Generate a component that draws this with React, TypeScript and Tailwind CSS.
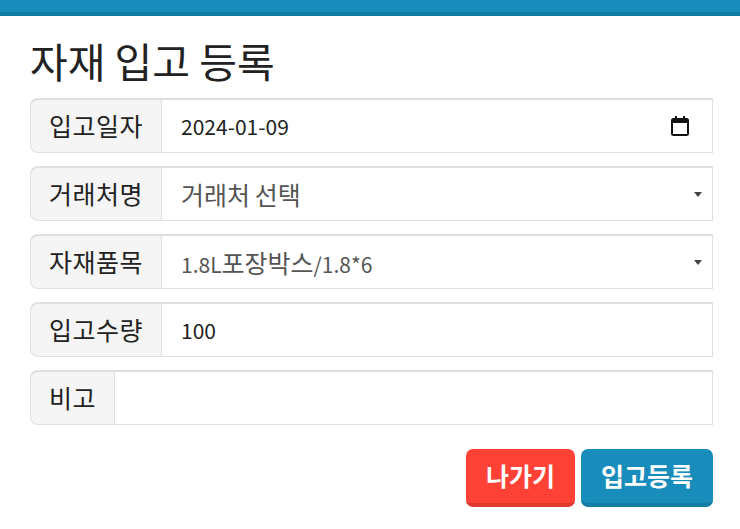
const rows: { label: string; value: string; kind: "date" | "select" | "text" }[] = [
  { label: "입고일자", value: "2024-01-09", kind: "date" },
  { label: "거래처명", value: "거래처 선택", kind: "select" },
  { label: "자재품목", value: "1.8L포장박스/1.8*6", kind: "select" },
  { label: "입고수량", value: "100", kind: "text" },
  { label: "비고", value: "", kind: "text" },
];

// hangul renders a bit larger than the latin text in the inputs
const Mixed = ({ text }: { text: string }) => (
  <>
    {text.split(/([가-힣]+)/).map((part, i) =>
      /[가-힣]/.test(part) ? (
        <span key={i} className="text-[25px]">
          {part}
        </span>
      ) : (
        <span key={i}>{part}</span>
      )
    )}
  </>
);

const CalendarIcon = () => (
  <svg width="20" height="22" viewBox="0 0 20 22" fill="none">
    <rect x="2" y="4" width="16" height="16" rx="1.5" stroke="#111" strokeWidth="2" />
    <rect x="2" y="4" width="16" height="4" fill="#111" />
    <rect x="5" y="1" width="2" height="4" fill="#111" />
    <rect x="13" y="1" width="2" height="4" fill="#111" />
  </svg>
);

const Caret = () => (
  <svg width="8" height="5" viewBox="0 0 8 5">
    <path d="M0 0h8L4 5z" fill="#444" />
  </svg>
);

export default function App() {
  return (
    <div
      className="min-h-[529px] bg-white text-[#222]"
      style={{ fontFamily: '"Noto Sans CJK KR", "Noto Sans", sans-serif' }}
    >
      <div className="h-4 border-b-4 border-[#137ca5] bg-[#188cba]" />
      <div className="pr-[27px] pl-[30px]">
        <h1 className="mt-[18px] mb-[12px] text-[41px] leading-[52px] font-normal text-[#222]">
          자재 입고 등록
        </h1>
        <div className="flex flex-col gap-[13px]">
          {rows.map((row) => (
            <div key={row.label} className="flex h-[55px]">
              <div className="flex items-center rounded-l-[8px] border border-r-0 border-t-2 border-[#dcdfe3] bg-[#f5f5f5] px-[18px] text-[25px] tracking-[0.5px] text-[#222]">
                {row.label}
              </div>
              <div className="flex flex-1 items-center border border-t-2 border-[#dcdfe3] bg-white pr-[14px] pl-[19px] text-[21px] leading-none">
                <span className={row.kind === "select" ? "flex-1 text-[#555]" : "flex-1 text-[#222]"}>
                  <Mixed text={row.value} />
                </span>
                {row.kind === "date" ? <span className="mr-[8px] flex"><CalendarIcon /></span> : null}
                {row.kind === "select" ? <span className="mr-[-4px] flex"><Caret /></span> : null}
              </div>
            </div>
          ))}
        </div>
        <div className="mt-[24px] flex justify-end gap-[6px]">
          <button className="h-[58px] rounded-[7px] border-b-4 border-[#de3a30] bg-[#ff4136] px-[20px] text-[25px] font-bold text-white">
            나가기
          </button>
          <button className="h-[58px] rounded-[7px] border-b-4 border-[#137ca5] bg-[#188cba] px-[20px] text-[25px] font-bold text-white">
            입고등록
          </button>
        </div>
      </div>
    </div>
  );
}
